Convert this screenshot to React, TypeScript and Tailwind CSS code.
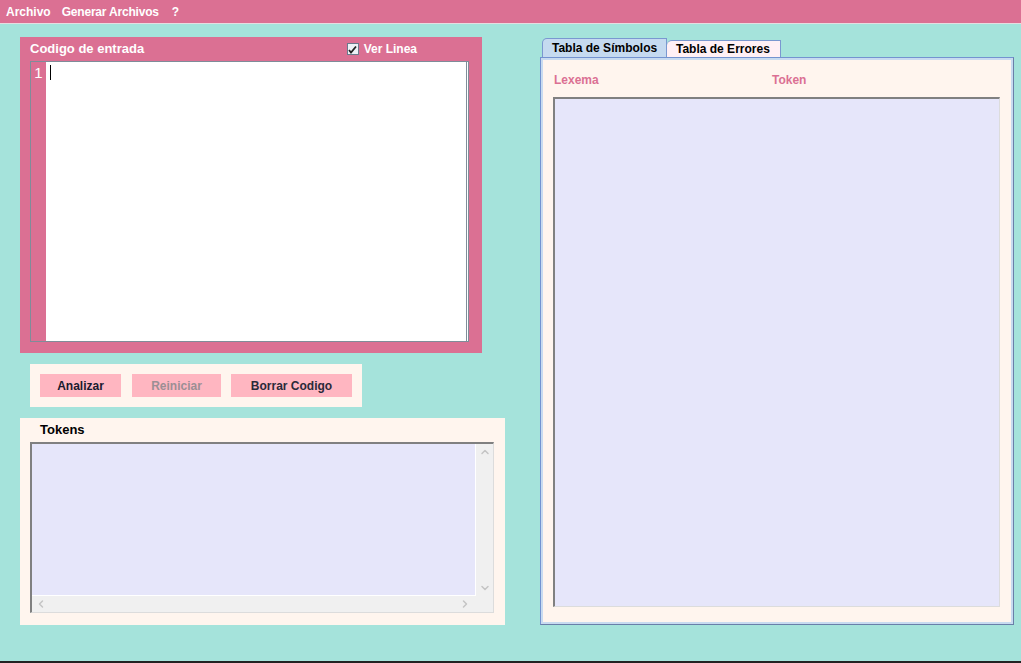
import { ChevronUp, ChevronDown, ChevronLeft, ChevronRight } from "lucide-react";

const font = { fontFamily: '"Liberation Sans", Arial, sans-serif' };

function CodePanel() {
  return (
    <div className="w-[462px] h-[316px] bg-[#DB7093] flex flex-col">
      {/* header */}
      <div className="h-[24px] flex items-center pl-[10px] pr-[65px]">
        <span className="text-white font-bold text-[13px]">Codigo de entrada</span>
        <div className="ml-auto flex items-center gap-[5px]">
          <div className="w-[12px] h-[12px] bg-[#eef2f7] border border-[#6b7a8c] flex items-center justify-center">
            <svg width="9" height="9" viewBox="0 0 9 9">
              <path d="M1 5 L3 7.5 L8 1.5" stroke="#222" strokeWidth="1.8" fill="none" />
            </svg>
          </div>
          <span className="text-white font-bold text-[12px]">Ver Linea</span>
        </div>
      </div>
      {/* editor */}
      <div className="ml-[10px] w-[439px] h-[281px] flex border border-[#7f8c99] bg-white">
        <div className="w-[15px] bg-[#DB7093] flex justify-center pt-[3px]">
          <span className="text-white text-[15px] leading-[16px]">1</span>
        </div>
        <div className="flex-1 border-r border-[#7f8c99] mr-[1px] pl-[4px] pt-[3px]">
          <div className="w-[1px] h-[15px] bg-black" />
        </div>
      </div>
    </div>
  );
}

function Buttons() {
  return (
    <div className="ml-[10px] mt-[11px] w-[332px] h-[43px] bg-[#FFF5EE] flex items-center gap-[10px] pl-[10px]">
      <button className="w-[81px] h-[23px] bg-[#FFB6C1] text-[12px] font-bold text-[#1a1a2e]">Analizar</button>
      <button className="w-[89px] h-[23px] bg-[#FFB6C1] text-[12px] font-bold text-[#9b8f94] ml-[1px]">Reiniciar</button>
      <button className="w-[121px] h-[23px] bg-[#FFB6C1] text-[12px] font-bold text-[#2a2a3a]">Borrar Codigo</button>
    </div>
  );
}

function Tokens() {
  return (
    <div className="mt-[11px] w-[485px] h-[207px] bg-[#FFF5EE] flex flex-col pl-[10px]">
      <div className="h-[24px] pl-[10px] flex items-center">
        <span className="text-[13px] font-bold text-black">Tokens</span>
      </div>
      <div className="w-[464px] h-[171px] border-t-2 border-l-2 border-[#808080] border-r border-b border-r-[#dcdcdc] border-b-[#dcdcdc] flex flex-col">
        <div className="flex flex-1">
          <div className="flex-1 bg-[#E6E6FA] border-r border-b border-white" />
          <div className="w-[17px] bg-[#f0f0f0] flex flex-col items-center justify-between py-[2px]">
            <ChevronUp className="w-[12px] h-[12px] text-[#c4c4c4]" strokeWidth={3} />
            <ChevronDown className="w-[12px] h-[12px] text-[#c4c4c4]" strokeWidth={3} />
          </div>
        </div>
        <div className="h-[16px] bg-[#f0f0f0] flex items-center justify-between pl-[3px] pr-[22px]">
          <ChevronLeft className="w-[12px] h-[12px] text-[#c4c4c4]" strokeWidth={3} />
          <ChevronRight className="w-[12px] h-[12px] text-[#c4c4c4]" strokeWidth={3} />
        </div>
      </div>
    </div>
  );
}

function Tables() {
  return (
    <div className="flex flex-col">
      <div className="flex items-end h-[19px] pl-[2px]">
        <div className="w-[125px] h-[19px] bg-[#C5DAF0] border border-b-0 border-[#7a98d0] rounded-tl-[5px] flex items-center pl-[9px]">
          <span className="text-[12px] font-bold text-black">Tabla de Símbolos</span>
        </div>
        <div className="w-[114px] h-[17px] bg-[#FFF0F5] border border-b-0 border-l-0 border-[#7a98d0] rounded-tl-[5px] flex items-center pl-[9px]">
          <span className="text-[12px] font-bold text-black">Tabla de Errores</span>
        </div>
      </div>
      <div className="w-[474px] h-[568px] border border-[#7393d0] border-r-[#6a7fa8] border-b-[#6a7fa8]">
        <div className="w-full h-full border-2 border-[#C8DBF0] bg-[#FFF5EE] flex flex-col pl-[10px] pr-[11px] pb-[15px]">
          <div className="h-[37px] flex items-center pt-[3px]">
            <span className="w-[219px] pl-[1px] text-[12px] font-bold text-[#DB7093]">Lexema</span>
            <span className="text-[12px] font-bold text-[#DB7093]">Token</span>
          </div>
          <div className="flex-1 bg-[#E6E6FA] border-t-2 border-l-2 border-[#808080] border-r border-b border-r-[#dcdcdc] border-b-[#dcdcdc]" />
        </div>
      </div>
    </div>
  );
}

export default function App() {
  return (
    <div className="w-[1021px] h-[663px] bg-[#A5E3DB] flex flex-col overflow-hidden" style={font}>
      <div className="h-[24px] bg-[#DB7093] border-b border-[#e6dde0] flex items-center gap-[11px] pl-[6px]">
        <span className="text-white font-bold text-[12px]">Archivo</span>
        <span className="text-white font-bold text-[12px] tracking-[-0.2px]">Generar Archivos</span>
        <span className="text-white font-bold text-[12px] ml-[2px]">?</span>
      </div>
      <div className="flex-1 flex">
        <div className="pl-[20px] pt-[13px] flex flex-col">
          <CodePanel />
          <Buttons />
          <Tokens />
        </div>
        <div className="ml-[35px] pt-[14px]">
          <Tables />
        </div>
      </div>
      <div className="h-[2px] bg-[#222]" />
    </div>
  );
}
